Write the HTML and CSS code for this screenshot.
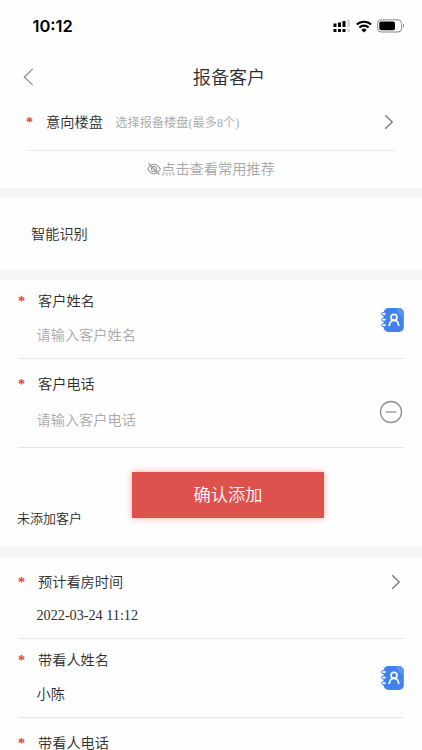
FILE: index.html
```
<!DOCTYPE html>
<html lang="zh-CN">
<head>
<meta charset="utf-8">
<title>报备客户</title>
<link rel="stylesheet" href="styles.css">
</head>
<body>
<svg class="defs" width="0" height="0" aria-hidden="true">
  <symbol id="chevron" viewBox="0 0 10 16"><path d="M1.2 1.2 8.2 8 1.2 14.8" fill="none" stroke="currentColor" stroke-width="1.3"/></symbol>
  <symbol id="contact" viewBox="0 0 23 24">
    <rect x="2.6" y="0" width="20.2" height="24" rx="4.8" fill="#3f82ee"/>
    <path d="M15.5 0H18a4.8 4.8 0 0 1 4.8 4.8V9.5Q17 7.500 15.500 0Z" fill="#5b94f2"/>
    <g fill="#fff" stroke="#3f82ee" stroke-width="1"><rect x=".6" y="4.600" width="4.600" height="2.800" rx="1.400"/><rect x=".6" y="10.200" width="4.600" height="2.800" rx="1.400"/><rect x=".6" y="15.800" width="4.600" height="2.800" rx="1.400"/></g>
    <g fill="none" stroke="#fff" stroke-width="1.700" stroke-linecap="round"><circle cx="13" cy="9.300" r="3"/><path d="M8.300 17.300c.4-3 2-5 4.700-5s4.300 2 4.700 5"/></g>
  </symbol>
</svg>
<div class="status">
  <span class="time">10:12</span>
  <div class="indicators">
    <svg width="18" height="14" viewBox="0 0 18 14"><path d="M.5 4.500h3v3.500h-3zM5 3.500h3V8H5zM9.500 2h3v6h-3zM.5 10h3v3h-3zM5 10h3v3H5zM9.500 10h3v3h-3z"/><path d="M14.200.5h2.800V8h-2.800zM14.200 10h2.800v3h-2.800z" fill="#d5d5d5"/></svg>
    <svg class="wifi" width="16" height="13" viewBox="0 0 16 13"><g fill="none" stroke="#000" stroke-width="2.100"><path d="M.8 4.600a10.400 10.400 0 0 1 14.400 0"/><path d="M3.400 7.500a6.600 6.600 0 0 1 9.200 0"/></g><path d="M5.400 9.900a3.700 3.700 0 0 1 5.200 0L8 12.600z"/></svg>
    <svg width="28" height="14" viewBox="0 0 28 14"><rect x=".6" y=".8" width="24" height="12.200" rx="3.600" fill="none" stroke="#888" stroke-width="1"/><rect x="2.300" y="2.500" width="15.700" height="8.800" rx="1.800"/><path d="M26 4.800q2.400 2.100 0 4.200z" fill="#888"/></svg>
  </div>
</div>
<header class="nav">
  <svg class="back" width="11" height="18" viewBox="0 0 11 18"><path d="M9.800.8 1.200 9l8.600 8.200" fill="none" stroke="#888" stroke-width="1.100"/></svg>
  <h1>报备客户</h1>
</header>
<section>
  <div class="estate">
    <i class="star">*</i><span class="name">意向楼盘</span><span class="hint">选择报备楼盘(最多8个)</span>
    <svg class="arrow" width="10" height="16"><use href="#chevron"/></svg>
  </div>
  <div class="recommend">
    <svg width="14" height="12" viewBox="0 0 14 12"><g fill="none" stroke="#999" stroke-width="1.100"><path d="M.6 6Q7-3.400 13.400 6 7 15.400.6 6Z"/><circle cx="7" cy="6" r="2.500"/><path d="M1.600.5 12.400 11.500"/></g></svg><span>点击查看常用推荐</span>
  </div>
</section>
<section class="smart">智能识别</section>
<section>
  <div class="field customer">
    <div class="label"><i class="star">*</i>客户姓名</div>
    <div class="value placeholder">请输入客户姓名</div>
    <svg class="book" width="23" height="24"><use href="#contact"/></svg>
  </div>
  <div class="field phone">
    <div class="label"><i class="star">*</i>客户电话</div>
    <div class="value placeholder">请输入客户电话</div>
    <svg class="minus" width="24" height="24" viewBox="0 0 24 24"><g fill="none" stroke="#909090" stroke-width="1.300"><circle cx="12" cy="12" r="10.500"/><path d="M6.600 12h10.800"/></g></svg>
  </div>
  <div class="confirm">
    <span class="empty">未添加客户</span>
    <button>确认添加</button>
  </div>
</section>
<section>
  <div class="field visit">
    <div class="label"><i class="star">*</i>预计看房时间</div>
    <div class="value">2022-03-24 11:12</div>
    <svg class="arrow" width="10" height="16"><use href="#chevron"/></svg>
  </div>
  <div class="field guide">
    <div class="label"><i class="star">*</i>带看人姓名</div>
    <div class="value">小陈</div>
    <svg class="book" width="23" height="24"><use href="#contact"/></svg>
  </div>
  <div class="field last">
    <div class="label"><i class="star">*</i>带看人电话</div>
  </div>
</section>
</body>
</html>
```
FILE: styles.css
```
* { box-sizing: border-box; }
body {
  margin: 0;
  height: 750px;
  overflow: hidden;
  background: #fefefe;
  color: #2c2c2c;
  font: 350 14.2px/20px "Liberation Serif", "Noto Sans CJK SC", serif;
}
svg { display: block; flex: none; }
.defs { position: absolute; }
.status {
  height: 52px;
  padding: 0 17px 0 32.500px;
  display: flex;
  justify-content: space-between;
  align-items: center;
}
.time { font: 600 16.5px/20px Inter, sans-serif; color: #000; }
.indicators { display: flex; align-items: center; gap: 6px; }
.wifi { margin-left: -1px; margin-right: -1px; }
.nav {
  height: 50px;
  padding: 0 23px;
  display: grid;
  grid-template-columns: 11px 1fr 11px;
  align-items: center;
}
h1 { margin: 0; padding: 2px 0 0 36px; text-align: center; font-size: 18.100px; font-weight: 350; line-height: 26px; }
section + section { border-top: 10px solid #f6f6f6; }
.star { font-style: normal; font-weight: 700; color: #d8453f; }
.estate {
  height: 49px;
  margin: 0 26px;
  padding-bottom: 8px;
  border-bottom: 1px solid #ececec;
  display: flex;
  align-items: center;
}
.estate .name { margin-left: 13px; }
.estate .hint { margin-left: 12.500px; padding-top: 1px; font-size: 12.2px; color: #aaa; }
.arrow { margin-left: auto; color: #777; }
.estate .arrow { margin-right: 2px; }
.recommend {
  height: 36px;
  margin-bottom: 1px;
  display: flex;
  align-items: center;
  justify-content: center;
  color: #a5a5a5;
}
.smart { height: 82px; padding: 26px 31px; }
.field {
  margin: 0 18px;
  border-bottom: 1px solid #e6e6e6;
  display: grid;
  grid-template-columns: 1fr auto;
  grid-template-rows: 20px 20px;
}
.label { grid-column: 1; display: flex; }
.label .star { width: 20px; }
.value { grid-column: 1; padding-left: 18.500px; }
.placeholder { color: #aaa; }
.book, .minus { grid-column: 2; grid-row: 1 / 3; align-self: center; }
.customer { height: 79px; padding-top: 11px; row-gap: 14px; }
.customer .book { margin-top: 4px; }
.guide .book { margin-top: 2px; }
.phone { height: 89px; padding-top: 15px; row-gap: 16px; }
.minus { margin: 20px 1px 0 0; }
.confirm {
  height: 99px;
  padding: 24px 17px 0;
  display: grid;
  grid-template-columns: 115px 192px;
  align-items: start;
}
.empty { padding-top: 37px; font-size: 13px; }
button {
  height: 46px;
  padding: 2px 0 0;
  border: 0;
  background: #dd524d;
  color: #fff;
  font: 350 17.2px/26px "Liberation Serif", "Noto Sans CJK SC", serif;
  box-shadow: 0 0 7px rgba(240, 70, 65, .45);
}
.visit { height: 82px; padding-top: 15px; row-gap: 13px; }
.visit .arrow { grid-column: 2; grid-row: 1; align-self: center; margin-right: 3px; }
.guide { height: 79px; padding-top: 11px; row-gap: 14px; }
.last { border: 0; padding-top: 15px; }
```
